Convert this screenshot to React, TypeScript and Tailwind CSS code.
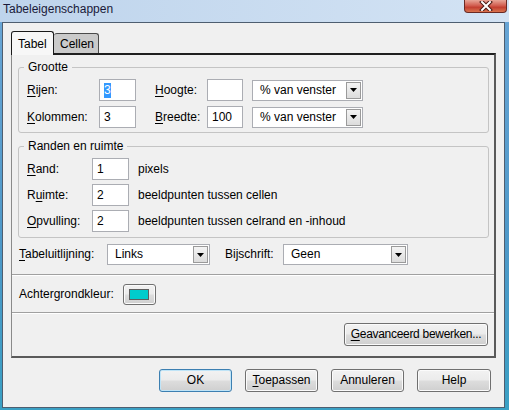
import React from 'react';

const btnBg =
  'bg-[linear-gradient(#f2f2f2_0%,#ebebeb_48%,#dddddd_52%,#cfcfcf_100%)] shadow-[inset_0_0_0_1px_#fbfbfb]';

function Mn({ c }: { c: string }) {
  return <span className="underline underline-offset-[2px]">{c}</span>;
}

function TextBox({ value, w, selected }: { value: string; w: string; selected?: boolean }) {
  return (
    <div className={`h-[22px] ${w} border border-[#abadb3] bg-white flex items-center pl-[4px]`}>
      {selected ? (
        <span className="bg-[#3399ff] text-white leading-[15px]">{value}</span>
      ) : (
        <span className="leading-[15px]">{value}</span>
      )}
    </div>
  );
}

function Dropdown({ value, w }: { value: string; w: string }) {
  return (
    <div className={`h-[21px] ${w} border border-[#abadb3] bg-white flex p-[1px]`}>
      <div className="flex-1 pl-[6px] flex items-center leading-[15px]">{value}</div>
      <div className="w-[15px] border border-[#9a9a9a] bg-[linear-gradient(#f4f4f4,#dcdcdc)] flex items-center justify-center">
        <svg width="7" height="4" viewBox="0 0 7 4">
          <path d="M0 0h7L3.5 4z" fill="#000" />
        </svg>
      </div>
    </div>
  );
}

function Button({ children, w, primary }: { children: React.ReactNode; w: string; primary?: boolean }) {
  return (
    <div
      className={`h-[23px] ${w} rounded-[3px] border ${
        primary ? 'border-[#3c7fb1] shadow-[inset_0_0_0_1px_#bfe4f7]' : 'border-[#707070] shadow-[inset_0_0_0_1px_#fbfbfb]'
      } bg-[linear-gradient(#f2f2f2_0%,#ebebeb_48%,#dddddd_52%,#cfcfcf_100%)] flex items-center justify-center leading-[15px]`}
    >
      {children}
    </div>
  );
}

function Separator() {
  return <div className="h-[2px] border-t border-t-[#a0a0a0] border-b border-b-white" />;
}

export default function App() {
  return (
    <div className="w-[509px] h-[410px] bg-[linear-gradient(#6aa6d6,#4d98c8_60%,#3aa0c4)] flex flex-col font-['Liberation_Sans',Arial,sans-serif] text-[12px] text-black overflow-hidden">
      {/* Title bar */}
      <div className="h-[22px] bg-[linear-gradient(to_right,#bed4ec,#d3e3f4)] flex items-start justify-between">
        <div className="pl-[3px] pt-[2px] leading-[15px] text-[#1a1a3a]">Tabeleigenschappen</div>
        <div className="mr-[2px] w-[43px] h-[13px] rounded-b-[4px] border border-t-0 border-[#6a2a24] bg-[linear-gradient(#e8a597,#d0584a_50%,#c23e30_60%,#d9744f)] flex items-center justify-center">
          <svg width="14" height="10" viewBox="0 0 14 10">
            <path d="M3 1l8 8M11 1l-8 8" stroke="#4a1a14" strokeWidth="4" strokeLinecap="square" />
            <path d="M3 1l8 8M11 1l-8 8" stroke="#ffffff" strokeWidth="2" strokeLinecap="square" />
          </svg>
        </div>
      </div>

      {/* Client area */}
      <div className="ml-[2px] w-[503px] h-[386px] border border-[#4e5e70] bg-[#f0f0f0] flex flex-col">
        {/* Tabs */}
        <div className="flex items-end pl-[8px] pt-[8px]">
          <div className="relative z-10 w-[43px] h-[24px] -mb-[2px] rounded-t-[3px] border border-b-0 border-[#1a1a1a] bg-[#f7f7f7] pl-[6px] pt-[5px] leading-[15px]">
            Tabel
          </div>
          <div className="w-[45px] h-[20px] rounded-t-[3px] border border-b-0 border-l-0 border-[#4a4a4a] bg-[#cacaca] pl-[6px] pt-[3px] leading-[15px]">
            Cellen
          </div>
        </div>

        {/* Tab panel */}
        <div className="ml-[8px] w-[485px] border-t-2 border-t-[#1f1f1f] border-l border-l-[#8a8a8a] border-r-2 border-r-[#5a5a5a] border-b-2 border-b-[#5a5a5a] flex flex-col">
          {/* Grootte */}
          <fieldset className="ml-[6px] mt-[5px] w-[471px] border border-[#c4c4c4] rounded-[3px] pb-[4px]">
            <legend className="ml-[5px] px-[4px] leading-[15px]">Grootte</legend>
            <div className="pt-[4px] pl-[8px] flex flex-col gap-[5px]">
              <div className="flex items-center">
                <div className="w-[72px] leading-[15px]">
                  <Mn c="R" />ijen:
                </div>
                <TextBox value="3" w="w-[37px]" selected />
                <div className="ml-[19px] w-[52px] leading-[15px]">
                  <Mn c="H" />oogte:
                </div>
                <TextBox value="" w="w-[36px]" />
                <div className="ml-[9px]">
                  <Dropdown value="% van venster" w="w-[111px]" />
                </div>
              </div>
              <div className="flex items-center">
                <div className="w-[72px] leading-[15px]">
                  <Mn c="K" />olommen:
                </div>
                <TextBox value="3" w="w-[37px]" />
                <div className="ml-[19px] w-[52px] leading-[15px]">
                  <Mn c="B" />reedte:
                </div>
                <TextBox value="100" w="w-[36px]" />
                <div className="ml-[9px]">
                  <Dropdown value="% van venster" w="w-[111px]" />
                </div>
              </div>
            </div>
          </fieldset>

          {/* Randen en ruimte */}
          <fieldset className="ml-[6px] mt-[6px] w-[471px] border border-[#c4c4c4] rounded-[3px] pb-[5px]">
            <legend className="ml-[5px] px-[4px] leading-[15px]">Randen en ruimte</legend>
            <div className="pt-[4px] pl-[8px] flex flex-col gap-[4px]">
              <div className="flex items-center">
                <div className="w-[65px] leading-[15px]">
                  <Mn c="R" />and:
                </div>
                <TextBox value="1" w="w-[37px]" />
                <div className="ml-[9px] leading-[15px]">pixels</div>
              </div>
              <div className="flex items-center">
                <div className="w-[65px] leading-[15px]">
                  R<Mn c="u" />imte:
                </div>
                <TextBox value="2" w="w-[37px]" />
                <div className="ml-[9px] leading-[15px]">beeldpunten tussen cellen</div>
              </div>
              <div className="flex items-center">
                <div className="w-[65px] leading-[15px]">
                  <Mn c="O" />pvulling:
                </div>
                <TextBox value="2" w="w-[37px]" />
                <div className="ml-[9px] leading-[15px]">beeldpunten tussen celrand en -inhoud</div>
              </div>
            </div>
          </fieldset>

          {/* Uitlijning / bijschrift */}
          <div className="mt-[6px] pl-[7px] flex items-center">
            <div className="w-[88px] leading-[15px]">
              <Mn c="T" />abeluitlijning:
            </div>
            <Dropdown value="Links" w="w-[103px]" />
            <div className="ml-[15px] w-[58px] leading-[15px]">Bijschrift:</div>
            <Dropdown value="Geen" w="w-[125px]" />
          </div>

          <div className="mt-[9px]">
            <Separator />
          </div>

          {/* Achtergrondkleur */}
          <div className="mt-[8px] pl-[7px] flex items-center">
            <div className="w-[104px] leading-[15px]">Achtergrondkleur:</div>
            <div className={`w-[33px] h-[21px] rounded-[3px] border border-[#707070] ${btnBg} flex items-center pl-[5px]`}>
              <div className="w-[20px] h-[11px] border border-[#5e5e5e] bg-[#00cccc]" />
            </div>
          </div>

          <div className="mt-[7px]">
            <Separator />
          </div>

          <div className="mt-[9px] mb-[10px] pr-[6px] flex justify-end">
            <Button w="w-[144px]">
              <span className="tracking-[-0.3px]">
                <Mn c="G" />eavanceerd bewerken...
              </span>
            </Button>
          </div>
        </div>

        {/* Dialog buttons */}
        <div className="mt-[11px] pr-[13px] flex justify-end gap-[13px]">
          <Button w="w-[73px]" primary>
            OK
          </Button>
          <Button w="w-[73px]">
            <span>
              <Mn c="T" />oepassen
            </span>
          </Button>
          <Button w="w-[73px]">Annuleren</Button>
          <Button w="w-[74px]">Help</Button>
        </div>
      </div>
    </div>
  );
}
